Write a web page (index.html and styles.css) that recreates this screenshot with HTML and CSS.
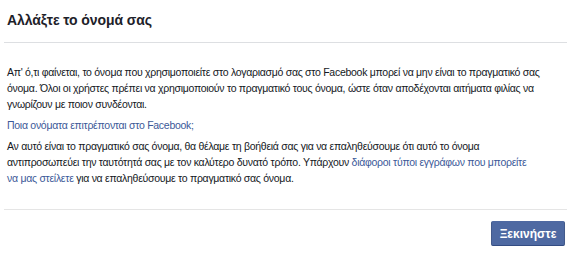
FILE: index.html
```html
<!DOCTYPE html>
<html lang="el">
<head>
<meta charset="utf-8">
<title>Αλλάξτε το όνομά σας</title>
<link rel="stylesheet" href="styles.css">
</head>
<body>
<div class="dialog">
  <div class="dialog-header">
    <h2 class="dialog-title">Αλλάξτε το όνομά σας</h2>
  </div>
  <div class="dialog-body">
    <p class="para">Απ' ό,τι φαίνεται, το όνομα που χρησιμοποιείτε στο λογαριασμό σας στο Facebook μπορεί να μην είναι το πραγματικό σας όνομα. Όλοι οι χρήστες πρέπει να χρησιμοποιούν το πραγματικό τους όνομα, ώστε όταν αποδέχονται αιτήματα φιλίας να γνωρίζουν με ποιον συνδέονται.</p>
    <p class="para"><a class="link" href="#">Ποια ονόματα επιτρέπονται στο Facebook;</a></p>
    <p class="para">Αν αυτό είναι το πραγματικό σας όνομα, θα θέλαμε τη βοήθειά σας για να επαληθεύσουμε ότι αυτό το όνομα<br>αντιπροσωπεύει την ταυτότητά σας με τον καλύτερο δυνατό τρόπο. Υπάρχουν <a class="link" href="#">διάφοροι τύποι εγγράφων που μπορείτε<br>να μας στείλετε</a> για να επαληθεύσουμε το πραγματικό σας όνομα.</p>
  </div>
  <div class="dialog-footer">
    <button class="btn-primary" type="button">Ξεκινήστε</button>
  </div>
</div>
</body>
</html>
```
FILE: styles.css
```css
html, body {
  margin: 0;
  padding: 0;
  background: #ffffff;
}

body {
  font-family: "Liberation Sans", Arial, sans-serif;
  color: #1d2129;
}

.dialog {
  width: 563px;
  padding: 0 4px;
}

.dialog-header {
  height: 43px;
  border-bottom: 1px solid #dddfe2;
  padding: 0 3px;
  box-sizing: border-box;
  display: flex;
  align-items: flex-start;
}

.dialog-title {
  margin: 11px 0 0;
  font-size: 14px;
  line-height: 18px;
  font-weight: bold;
  letter-spacing: -0.1px;
  color: #1d2129;
}

.dialog-body {
  padding: 21px 0 23px 3px;
}

.para {
  margin: 0 0 5px;
  font-size: 10.5px;
  line-height: 16px;
  letter-spacing: -0.28px;
  color: #141823;
}

.para:last-child {
  margin-bottom: 0;
}

.link {
  color: #3b5998;
  text-decoration: none;
}

.dialog-footer {
  border-top: 1px solid #e5e5e5;
  padding: 11px 2px 0 0;
  display: flex;
  justify-content: flex-end;
}

.btn-primary {
  height: 25px;
  width: 74px;
  padding: 0;
  border: 1px solid #4267b2;
  border-color: #4e69a2 #435a8b #334c83;
  border-radius: 2px;
  background: #4e69a2;
  color: #ffffff;
  font-family: "Liberation Sans", Arial, sans-serif;
  font-size: 12px;
  font-weight: bold;
  box-shadow: 0 1px 1px rgba(0, 0, 0, 0.05);
}
```
